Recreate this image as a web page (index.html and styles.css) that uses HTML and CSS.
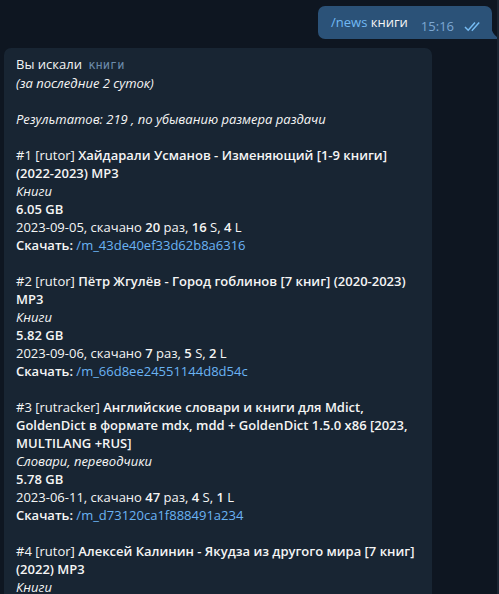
FILE: index.html
```html
<!DOCTYPE html>
<html lang="ru">
<head>
    <meta charset="UTF-8">
    <title>news книги</title>
    <link rel="stylesheet" href="styles.css">
</head>
<body>
    <div class="chat">
        <div class="row out">
            <div class="bubble outBubble">
                <span class="msg"><span class="cmd">/news</span> книги</span>
                <span class="meta">15:16
                    <svg class="checks" width="19" height="11" viewBox="0 0 19 11"><path d="M1 6 L4.2 9.2 L11 1.5" fill="none" stroke="#76bbf2" stroke-width="1.5"/><path d="M7.8 8.7 L8.3 9.2 L15.2 1.5" fill="none" stroke="#76bbf2" stroke-width="1.5"/></svg>
                </span>
                <svg class="tail" width="10" height="12" viewBox="0 0 10 12"><path d="M0 0 L0 12 L9 12 C5 10 1 6 0 0 Z" fill="#2b5278"/></svg>
            </div>
        </div>

        <div class="row in">
            <div class="bubble inBubble">
                <p>Вы искали <code>книги</code><br><i>(за последние 2 суток)</i></p>
                <p><i>Результатов: 219 , по убыванию размера раздачи</i></p>

                <p>#1 [rutor] <b>Хайдарали Усманов - Изменяющий [1-9 книги] (2022-2023) MP3</b><br>
                <i>Книги</i><br>
                <b>6.05 GB</b><br>
                2023-09-05, скачано <b>20</b> раз, <b>16</b> S, <b>4</b> L<br>
                <b>Скачать:</b> <a>/m_43de40ef33d62b8a6316</a></p>

                <p>#2 [rutor] <b>Пётр Жгулёв - Город гоблинов [7 книг] (2020-2023) MP3</b><br>
                <i>Книги</i><br>
                <b>5.82 GB</b><br>
                2023-09-06, скачано <b>7</b> раз, <b>5</b> S, <b>2</b> L<br>
                <b>Скачать:</b> <a>/m_66d8ee24551144d8d54c</a></p>

                <p>#3 [rutracker] <b>Английские словари и книги для Mdict, GoldenDict в формате mdx, mdd + GoldenDict 1.5.0 x86 [2023, MULTILANG +RUS]</b><br>
                <i>Словари, переводчики</i><br>
                <b>5.78 GB</b><br>
                2023-06-11, скачано <b>47</b> раз, <b>4</b> S, <b>1</b> L<br>
                <b>Скачать:</b> <a>/m_d73120ca1f888491a234</a></p>

                <p>#4 [rutor] <b>Алексей Калинин - Якудза из другого мира [7 книг] (2022) MP3</b><br>
                <i>Книги</i><br>
                <b>5.71 GB</b><br>
                2023-09-07, скачано <b>12</b> раз, <b>3</b> S, <b>1</b> L<br>
                <b>Скачать:</b> <a>/m_1b9f0c2e7a44d1e3c590</a></p>
            </div>
        </div>
    </div>
</body>
</html>
```

FILE: styles.css
```css
html { background: #0e1621; }
body { margin: 0; font-family: 'Open Sans', sans-serif; font-size: 13px; line-height: 18px; color: #f5f5f5; background: #0e1621; height: 594px; overflow: hidden; border-right: 2px solid #1b2532; }
.chat { display: flex; flex-direction: column; padding-top: 6px; }
.row { display: flex; }
.out { justify-content: flex-end; padding-right: 5px; }
.in { padding-left: 4px; margin-top: 9px; }
.bubble { position: relative; border-radius: 7px; }
.outBubble { background: #2b5278; display: flex; align-items: flex-end; height: 33px; box-sizing: border-box; padding: 7px 9px 4px 13px; border-bottom-right-radius: 0; }
.msg { align-self: flex-start; }
.cmd { color: #71b9f4; }
.meta { color: #7da8d3; margin-left: 13px; display: flex; align-items: center; gap: 10px; font-size: 13px; line-height: 18px; }
.checks { margin-top: 1px; }
.tail { position: absolute; right: -9px; bottom: 0; }
.inBubble { background: #182533; width: 428px; box-sizing: border-box; padding: 7px 12px 12px 12px; }
p { margin: 0 0 18px 0; }
b { font-weight: 600; }
i { font-style: italic; }
code { font-family: 'DejaVu Sans Mono', monospace; font-size: 12px; color: #6d8cab; margin-left: 3px; }
a { color: #6ab3f3; }
```
